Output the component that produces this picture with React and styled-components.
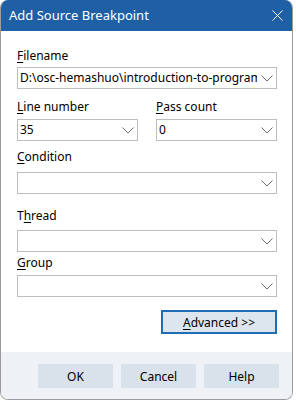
import React from 'react';
import styled, { createGlobalStyle } from 'styled-components';

const GlobalStyle = createGlobalStyle`
  html, body {
    margin: 0;
    padding: 0;
    background: #ffffff;
  }
  body {
    font-family: 'Segoe UI', 'Noto Sans', 'Open Sans', sans-serif;
    font-size: 12px;
    color: #000;
  }
`;

const Chevron = () => (
  <svg width='12' height='7' viewBox='0 0 12 7'>
    <path d='M0.5 0.5 L6 6 L11.5 0.5' fill='none' stroke='#6d6d6d' strokeWidth='1' />
  </svg>
);

const CloseIcon = () => (
  <svg width='11' height='11' viewBox='0 0 11 11'>
    <path d='M0.5 0.5 L10.5 10.5 M10.5 0.5 L0.5 10.5' stroke='#fff' strokeWidth='1' />
  </svg>
);

const Field = ({ label, hotkey, value = '', labelGap, comboGap }) => {
  const i = label.indexOf(hotkey);
  return (
    <div>
      <Label $mt={labelGap}>
        {label.slice(0, i)}
        <Key>{hotkey}</Key>
        {label.slice(i + hotkey.length)}
      </Label>
      <Combo $mt={comboGap}>
        <ComboText>{value}</ComboText>
        <Chevron />
      </Combo>
    </div>
  );
};

const App = () => (
  <>
    <GlobalStyle />
    <Window>
      <TitleBar>
        <span>Add Source Breakpoint</span>
        <CloseButton>
          <CloseIcon />
        </CloseButton>
      </TitleBar>
      <Body>
        <Field label='Filename' hotkey='F' value='D:\osc-hemashuo\introduction-to-programming' labelGap={17} comboGap={3} />
        <TwoCols>
          <Field label='Line number' hotkey='L' value='35' labelGap={10} comboGap={4} />
          <Field label='Pass count' hotkey='P' value='0' labelGap={10} comboGap={4} />
        </TwoCols>
        <Field label='Condition' hotkey='C' labelGap={8} comboGap={7} />
        <Field label='Thread' hotkey='h' labelGap={14} comboGap={6} />
        <Field label='Group' hotkey='G' labelGap={3} comboGap={4} />
        <AdvancedRow>
          <AdvancedButton>
            <Key>A</Key>dvanced &gt;&gt;
          </AdvancedButton>
        </AdvancedRow>
      </Body>
      <Footer>
        <FooterButton>OK</FooterButton>
        <FooterButton>Cancel</FooterButton>
        <FooterButton>Help</FooterButton>
      </Footer>
    </Window>
  </>
);

const Window = styled.div`
  width: 293px;
  height: 400px;
  box-sizing: border-box;
  border: 1px solid #9c9c9c;
  border-top: none;
  border-radius: 8px;
  overflow: hidden;
  display: flex;
  flex-direction: column;
  background: #fff;
`;

const TitleBar = styled.div`
  height: 31px;
  flex: none;
  background: #1e5fa6;
  color: #fff;
  font-size: 13px;
  display: flex;
  align-items: center;
  justify-content: space-between;
  padding: 0 4px 1px 8px;
  box-sizing: border-box;
`;

const CloseButton = styled.div`
  width: 22px;
  display: flex;
  justify-content: center;
  align-items: center;
`;

const Body = styled.div`
  flex: 1;
  padding: 0 15px 0 16px;
  display: flex;
  flex-direction: column;
`;

const Label = styled.div`
  margin-top: ${(p) => p.$mt}px;
  line-height: 16px;
  height: 16px;
  font-size: 12px;
  white-space: nowrap;
`;

const Key = styled.span`
  text-decoration: underline;
  text-underline-offset: 2px;
`;

const Combo = styled.div`
  margin-top: ${(p) => p.$mt}px;
  height: 22px;
  box-sizing: border-box;
  border: 1px solid #bdbdbd;
  display: flex;
  align-items: center;
  padding: 0 3px 0 2px;
  gap: 4px;
  background: #fff;
`;

const ComboText = styled.div`
  flex: 1;
  overflow: hidden;
  white-space: nowrap;
  font-size: 12px;
  line-height: 20px;
`;

const TwoCols = styled.div`
  display: grid;
  grid-template-columns: 1fr 1fr;
  column-gap: 18px;
`;

const AdvancedRow = styled.div`
  display: flex;
  justify-content: flex-end;
  margin-top: 13px;
`;

const AdvancedButton = styled.div`
  width: 116px;
  height: 24px;
  box-sizing: border-box;
  border: 2px solid #1f6db5;
  background: #dde5ee;
  display: flex;
  align-items: center;
  justify-content: center;
  font-size: 12px;
`;

const Footer = styled.div`
  height: 47px;
  flex: none;
  background: #eef2f6;
  display: flex;
  justify-content: flex-end;
  gap: 8px;
  padding: 12px 13px 0 0;
  box-sizing: border-box;
`;

const FooterButton = styled.div`
  width: 75px;
  height: 24px;
  background: #d9e2eb;
  display: flex;
  align-items: center;
  justify-content: center;
  font-size: 12px;
`;

export default App;
